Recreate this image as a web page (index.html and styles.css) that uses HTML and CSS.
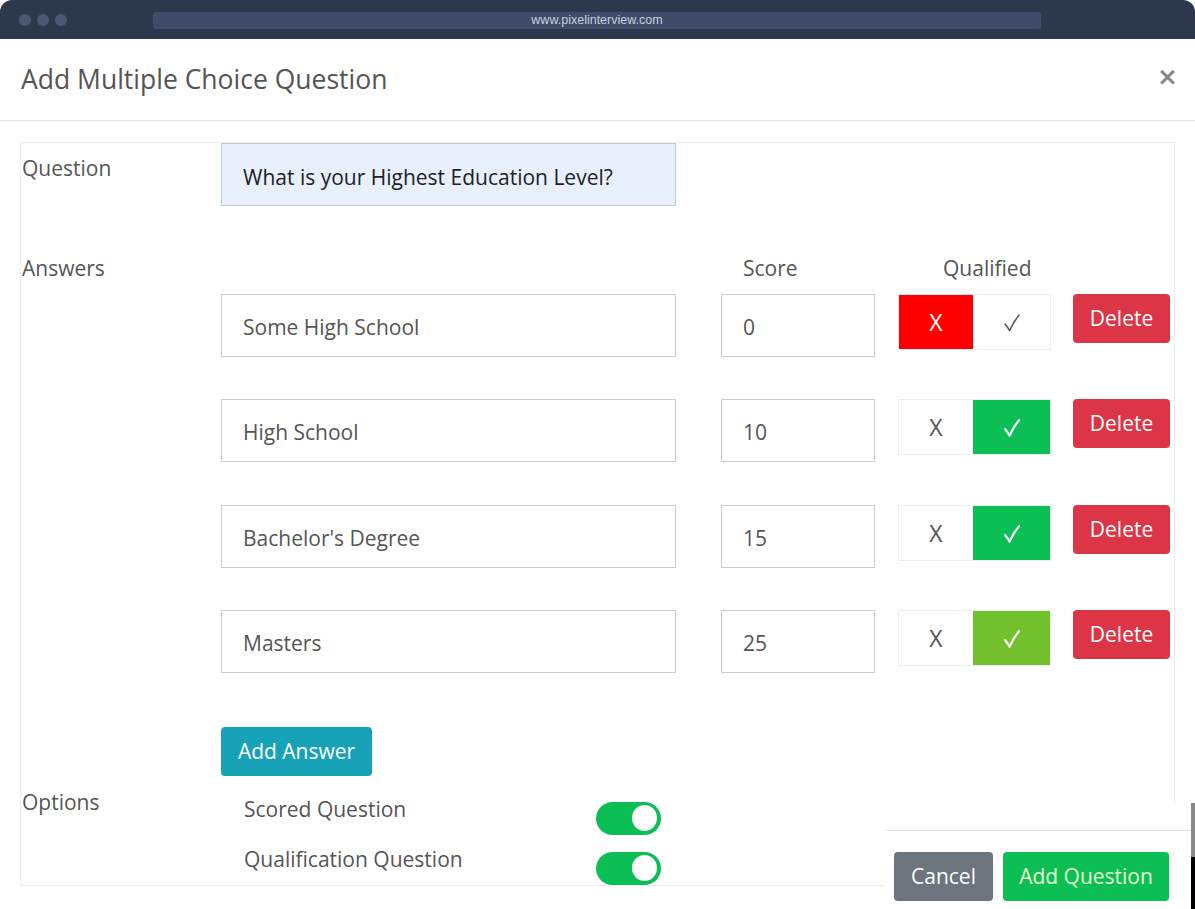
FILE: index.html
```html
<!DOCTYPE html>
<html>
<head>
<meta charset="utf-8">
<link rel="stylesheet" href="styles.css">
</head>
<body>
<div class="chrome">
  <div class="dots"><span></span><span></span><span></span></div>
  <div class="url">www.pixelinterview.com</div>
</div>
<div class="modal">
  <div class="modal-header">
    <h2 class="title">Add Multiple Choice Question</h2>
    <span class="close">×</span>
  </div>
  <div class="modal-body">
    <div class="card">
      <div class="row q-row">
        <div class="label q-label">Question</div>
        <div class="q-field">What is your Highest Education Level?</div>
      </div>
      <div class="row head-row">
        <div class="label">Answers</div>
        <div class="heads">
          <span class="h-text"></span>
          <span class="h-score">Score</span>
          <span class="h-qual">Qualified</span>
        </div>
      </div>
      <div class="row answer-row">
        <div></div>
        <div class="answer">
          <div class="field a-text">Some High School</div>
          <div class="field a-score">0</div>
          <div class="qual"><span class="q-x on-x">X</span><span class="q-c"><svg class="chk" viewBox="0 0 16 18"><path d="M1.2 10.2 Q3.2 12.5 5.6 16.6 Q9.5 7.5 15 1.2"/></svg></span></div>
          <button class="btn del">Delete</button>
        </div>
      </div>
      <div class="row answer-row">
        <div></div>
        <div class="answer">
          <div class="field a-text">High School</div>
          <div class="field a-score">10</div>
          <div class="qual"><span class="q-x">X</span><span class="q-c on-c"><svg class="chk" viewBox="0 0 16 18"><path d="M1.2 10.2 Q3.2 12.5 5.6 16.6 Q9.5 7.5 15 1.2"/></svg></span></div>
          <button class="btn del">Delete</button>
        </div>
      </div>
      <div class="row answer-row">
        <div></div>
        <div class="answer">
          <div class="field a-text">Bachelor's Degree</div>
          <div class="field a-score">15</div>
          <div class="qual"><span class="q-x">X</span><span class="q-c on-c"><svg class="chk" viewBox="0 0 16 18"><path d="M1.2 10.2 Q3.2 12.5 5.6 16.6 Q9.5 7.5 15 1.2"/></svg></span></div>
          <button class="btn del">Delete</button>
        </div>
      </div>
      <div class="row answer-row">
        <div></div>
        <div class="answer">
          <div class="field a-text">Masters</div>
          <div class="field a-score">25</div>
          <div class="qual"><span class="q-x">X</span><span class="q-c on-lime"><svg class="chk" viewBox="0 0 16 18"><path d="M1.2 10.2 Q3.2 12.5 5.6 16.6 Q9.5 7.5 15 1.2"/></svg></span></div>
          <button class="btn del">Delete</button>
        </div>
      </div>
      <div class="row add-row">
        <div></div>
        <div><button class="btn add">Add Answer</button></div>
      </div>
      <div class="row opt-row">
        <div class="label opt-label">Options</div>
        <div class="opts">
          <div class="opt"><span class="opt-text">Scored Question</span><span class="switch"><span class="knob"></span></span></div>
          <div class="opt"><span class="opt-text">Qualification Question</span><span class="switch"><span class="knob"></span></span></div>
        </div>
      </div>
    </div>
  </div>
  <div class="footer">
    <div class="footer-inner">
      <button class="btn cancel">Cancel</button>
      <button class="btn save">Add Question</button>
    </div>
  </div>
  <div class="scrollbar"><div class="thumb"></div></div>
</div>
</body>
</html>
```

FILE: styles.css
```css
* { box-sizing: border-box; }
html, body { margin: 0; padding: 0; background: #fff; }
body {
  font-family: "Open Sans", "DejaVu Sans", sans-serif;
  color: #555;
  width: 1195px;
  height: 909px;
  overflow: hidden;
  position: relative;
}
.chrome {
  height: 39px;
  background: #2e384d;
  border-radius: 12px 12px 0 0;
  display: flex;
  align-items: flex-start;
  padding-top: 12px;
}
.dots { display: flex; gap: 6px; padding-left: 19px; padding-top: 2px; width: 153px; }
.dots span { width: 12px; height: 12px; border-radius: 50%; background: #4b5773; }
.url {
  width: 888px;
  height: 17px;
  background: #3f4c69;
  border-radius: 3px;
  color: #c9cfdb;
  font-family: "Liberation Sans", Arial, sans-serif;
  font-size: 12.5px;
  line-height: 17px;
  text-align: center;
}
.modal { position: relative; height: 870px; }
.modal-header {
  height: 82px;
  border-bottom: 1px solid #e3e3e3;
  display: flex;
  align-items: center;
  justify-content: space-between;
  padding: 0 17px 0 21px;
}
.title { margin: 0; font-size: 26.5px; font-weight: 400; color: #555; line-height: 34px; margin-top: -2px; }
.close { font-size: 25px; font-weight: 700; color: #888; line-height: 1; margin-top: -7px; font-family: "DejaVu Sans", sans-serif; }
.modal-body { padding: 21px 20px 0 20px; }
.card { border: 1px solid #eee; }
.row { display: grid; grid-template-columns: 200px 1fr; }
.label { font-size: 21px; line-height: 28px; color: #555; padding-left: 1px; }
.q-label { padding-top: 11px; }
.q-field {
  width: 455px;
  height: 63px;
  background: #e8f0fe;
  border: 1px solid #c5c9d0;
  padding-left: 21px;
  padding-top: 2px;
  font-size: 21px;
  line-height: 63px;
  color: #222;
}
.head-row { margin-top: 48px; }
.heads { display: flex; font-size: 21px; line-height: 28px; color: #555; }
.h-text { width: 500px; }
.h-score { width: 177px; padding-left: 22px; }
.h-qual { padding-left: 45px; }
.answer-row { margin-top: 12px; }
.answer-row + .answer-row { margin-top: 42.3px; }
.answer { display: flex; align-items: flex-start; }
.field {
  height: 63px;
  border: 1px solid #ccc;
  padding-left: 21px;
  font-size: 21px;
  line-height: 64px;
  color: #555;
  background: #fff;
}
.a-text { width: 455px; margin-right: 45px; }
.a-score { width: 154px; margin-right: 23px; }
.qual {
  width: 153px;
  height: 56px;
  border: 1px solid #eee;
  display: flex;
  margin-right: 22px;
}
.qual span { display: flex; align-items: center; justify-content: center; font-size: 23px; color: #555; }
.q-x { width: 74px; }
.q-c { flex: 1; }
.chk { width: 16px; height: 18px; fill: none; stroke: #555; stroke-width: 1.6; stroke-linecap: round; stroke-linejoin: round; margin-top: 2px; }
.on-x { background: #ff0000; color: #fff !important; }
.on-c { background: #0bbf54; }
.on-lime { background: #74c12e; }
.on-c .chk, .on-lime .chk { stroke: #fff; stroke-width: 2.2; }
.btn {
  font-family: "Open Sans", sans-serif;
  font-size: 21px;
  border: 0;
  border-radius: 4px;
  color: #fff;
  height: 49px;
  line-height: 48px;
  padding: 0 0 1px 0;
  cursor: pointer;
}
.del { width: 97px; background: #dc3545; }
.add-row { margin-top: 54px; }
.add { width: 151px; background: #17a2b8; }
.opt-label { padding-top: 12px; }
.opts { padding-top: 20.5px; padding-left: 23px; display: flex; flex-direction: column; gap: 11.5px; }
.opt { display: flex; align-items: flex-start; height: 38.5px; }
.opt-text { width: 352px; font-size: 21px; line-height: 27px; color: #555; }
.switch {
  margin-top: 5.5px;
  width: 65px;
  height: 33px;
  border-radius: 17px;
  background: #0bbf54;
  display: flex;
  align-items: center;
  justify-content: flex-end;
  padding-right: 4px;
}
.knob { width: 25px; height: 26px; border-radius: 50%; background: #fff; }
.footer {
  position: absolute;
  left: 886px;
  top: 764px;
  width: 305px;
  bottom: 0;
  background: #fff;
  padding-top: 27px;
}
.footer-inner {
  border-top: 1px solid #dedee6;
  padding: 21px 0 0 8px;
  display: flex;
  gap: 10px;
}
.cancel { width: 99px; background: #6c757d; }
.save { width: 166px; background: #0bbf54; color: #e6fcd2; }
.scrollbar {
  position: absolute;
  right: 0;
  top: 764px;
  bottom: 0;
  width: 4px;
  background: #000;
}
.thumb { height: 54px; background: #8a8a8a; }
```
